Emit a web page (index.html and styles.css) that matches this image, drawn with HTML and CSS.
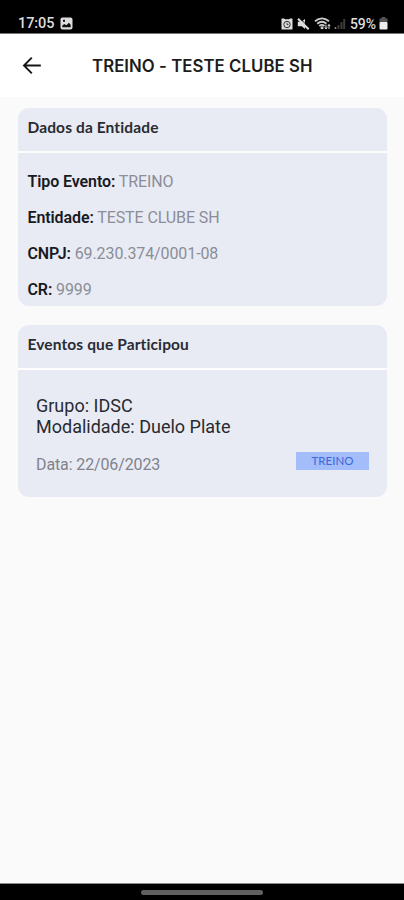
FILE: index.html
```html
<!DOCTYPE html>
<html lang="pt-BR">
<head>
<meta charset="utf-8">
<title>TREINO - TESTE CLUBE SH</title>
<link rel="stylesheet" href="styles.css">
</head>
<body>
<div class="status">
  <span class="time">17:05</span>
  <svg class="photo" width="13" height="13" viewBox="0 0 13 13"><rect x="0.5" y="0.5" width="12" height="12" rx="2" fill="#ddd"/><path d="M2.300 10.300V8.500l2-1.500 2 1.300 2.600-2.600 1.800 2v2.600z" fill="#111"/><rect x="3" y="2.800" width="2" height="2" fill="#111"/></svg>
  <div class="indicators">
    <svg width="12" height="12" viewBox="0 0 12 12"><path d="M.5 .5h2.500l1 .8h4l1-.8h2.500v11H.5z" fill="#ddd"/><circle cx="6" cy="6.500" r="3.200" fill="none" stroke="#333" stroke-width="1"/><path d="M6 4.800v1.900h1.500" fill="none" stroke="#333" stroke-width=".9"/></svg>
    <svg class="mute" width="13" height="12" viewBox="0 0 13 12"><path d="M.8 3.800h3.700L8 1v10L4.800 8.300H.8z" fill="#ddd"/><path d="M2.300 0l10.500 10" stroke="#000" stroke-width="1"/><path d="M1 .8l10.700 10.400" stroke="#ddd" stroke-width="2"/></svg>
    <svg class="wifi" width="17" height="13" viewBox="0 0 17 13"><g fill="none" stroke="#ccc" stroke-width="1.800"><path d="M1 4.300Q8 -1.500 15 4.300M3.200 6.700Q8 2.700 12.500 6.700M5.300 9Q8 6.700 10.500 9"/></g><circle cx="8" cy="10.800" r="1.500" fill="#ccc"/><path d="M12 7.500v4.500M15 7.500v4.500M10.800 10.300l1.200 1.700 1.200-1.700M13.800 9.200l1.200-1.700 1.200 1.700" stroke="#ddd" fill="none"/></svg>
    <svg class="signal" width="12" height="12" viewBox="0 0 12 12"><path d="M4.500 11V7M7.500 11V4M10.200 11V1" stroke="#3c3c3c" stroke-width="2"/><path d="M1.500 11v-2" stroke="#888" stroke-width="1.500"/></svg>
    <span class="percent">59%</span>
    <svg class="battery" width="9" height="13" viewBox="0 0 9 13"><path d="M2.700 0h3.600v1.500H8.500V5H.500V1.500h2.200z" fill="#555"/><rect x=".5" y="5" width="8" height="7.500" rx="1" fill="#eee"/></svg>
  </div>
</div>
<header class="appbar">
  <svg class="back" width="20" height="18" viewBox="0 0 20 18"><path d="M18.800 8.500H2M9.800 .7L2 8.500l7.800 7.800" fill="none" stroke="#161616" stroke-width="1.900"/></svg>
  <h1 class="title">TREINO - TESTE CLUBE SH</h1>
</header>
<main class="content">
  <section class="card entity">
    <h2 class="heading">Dados da Entidade</h2>
    <div class="rows">
      <p><b>Tipo Evento:</b> TREINO</p>
      <p><b>Entidade:</b> TESTE CLUBE SH</p>
      <p><b>CNPJ:</b> 69.230.374/0001-08</p>
      <p><b>CR:</b> 9999</p>
    </div>
  </section>
  <section class="card events">
    <h2 class="heading">Eventos que Participou</h2>
    <div class="event">
      <p>Grupo: IDSC</p>
      <p>Modalidade: Duelo Plate</p>
      <div class="meta"><span class="date">Data: 22/06/2023</span><span class="tag">TREINO</span></div>
    </div>
  </section>
</main>
<footer class="nav"><div class="handle"></div></footer>
</body>
</html>
```
FILE: styles.css
```css
* { box-sizing: border-box; }
body {
  margin: 0;
  width: 404px;
  height: 900px;
  display: flex;
  flex-direction: column;
  background: #fafafa;
  font-family: Roboto, sans-serif;
  overflow: hidden;
}
h1, h2, p { margin: 0; }
svg { display: block; flex: none; }
.status {
  height: 34px;
  flex: none;
  display: flex;
  align-items: center;
  padding: 14px 16px 0 18px;
  background: #000;
  border-bottom: 1px solid #777;
  color: #ddd;
}
.time { width: 37px; font-size: 14.5px; line-height: 20px; font-weight: 500; letter-spacing: -.1px; }
.photo { margin-left: 5px; }
.indicators { margin-left: auto; display: flex; align-items: center; }
.mute { margin-left: 4px; }
.wifi { margin-left: 4px; }
.signal { margin-left: 3px; }
.percent { margin-left: 4px; width: 28px; font-size: 14px; line-height: 20px; font-weight: 500; letter-spacing: -.1px; }
.battery { margin-left: 1px; }
.appbar {
  height: 63px;
  flex: none;
  display: flex;
  align-items: center;
  padding-left: 22px;
  background: #fff;
}
.title {
  margin-left: 50px;
  font: 600 16.8px/24px Inter, sans-serif;
  letter-spacing: .05px;
  color: #1c1c1c;
  white-space: nowrap;
}
.content {
  flex: 1;
  display: flex;
  flex-direction: column;
  gap: 19px;
  padding: 11px 17px 0 18px;
}
.card { border-radius: 11px; background: #e8ebf4; }
.entity { height: 198px; }
.events { height: 172px; }
.heading {
  height: 45px;
  padding: 9px 9px 0 9.5px;
  border-bottom: 2px solid #fdfdfd;
  font: 700 15.5px/20px Lato, sans-serif;
  font-variant-ligatures: none;
  letter-spacing: .12px;
  color: #292b33;
}
.rows { padding: 11px 9px 0 9.5px; }
.rows p {
  height: 36px;
  font-size: 16px;
  line-height: 36px;
  letter-spacing: -.1px;
  color: #8b8d98;
}
.rows b { font-weight: 600; color: #191a1f; }
.event {
  padding: 25px 18px 0;
  font-size: 18px;
  line-height: 21px;
  color: #292a30;
}
.meta {
  display: flex;
  justify-content: space-between;
  align-items: flex-start;
  margin-top: 15px;
}
.date { margin-top: 2px; font-size: 16px; letter-spacing: -.12px; color: #80828c; }
.tag {
  width: 73px;
  height: 18px;
  background: #a3bcfa;
  color: #3f67d5;
  font: 400 11.5px/18px Lato, sans-serif;
  text-align: center;
}
.nav {
  height: 17px;
  flex: none;
  padding-top: 6px;
  background: #000;
  border-top: 1px solid #888;
}
.handle { width: 122px; height: 5px; margin: 0 auto; border-radius: 3px; background: #606060; }
```
